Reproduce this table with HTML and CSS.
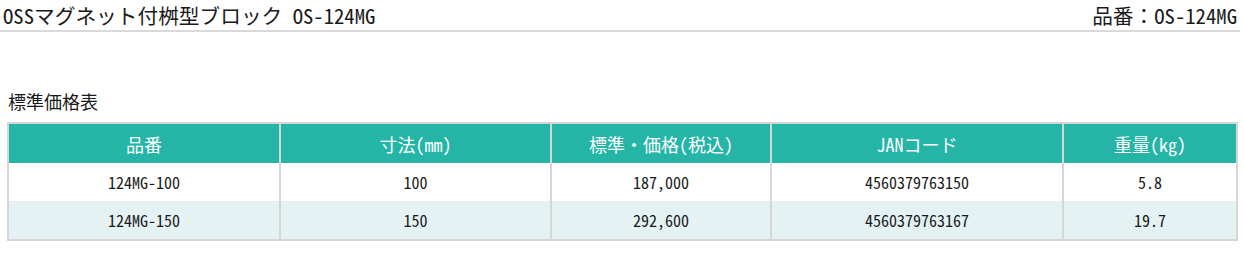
FILE: index.html
```html
<!DOCTYPE html>
<html lang="ja">
<head>
<meta charset="utf-8">
<title>OSSマグネット付桝型ブロック OS-124MG</title>
<link rel="stylesheet" href="styles.css">
</head>
<body>
<header class="page-head">
  <h1 class="title">OSSマグネット付桝型ブロック OS-124MG</h1>
  <p class="code">品番：OS-124MG</p>
</header>
<section class="prices">
  <h2 class="prices-title">標準価格表</h2>
  <table class="price-table">
    <thead>
      <tr>
        <th class="c1">品番</th>
        <th class="c2">寸法(mm)</th>
        <th class="c3">標準・価格(税込)</th>
        <th class="c4">JANコード</th>
        <th class="c5">重量(kg)</th>
      </tr>
    </thead>
    <tbody>
      <tr>
        <td>124MG-100</td>
        <td>100</td>
        <td>187,000</td>
        <td>4560379763150</td>
        <td>5.8</td>
      </tr>
      <tr class="alt">
        <td>124MG-150</td>
        <td>150</td>
        <td>292,600</td>
        <td>4560379763167</td>
        <td>19.7</td>
      </tr>
    </tbody>
  </table>
</section>
</body>
</html>
```

FILE: styles.css
```css
html, body {
  margin: 0;
  padding: 0;
  background: #ffffff;
}

body {
  width: 1243px;
  color: #1a1a1a;
  font-family: "Noto Sans Mono CJK JP", "Noto Sans CJK JP", monospace;
}

.page-head {
  display: flex;
  justify-content: space-between;
  align-items: center;
  width: 1240px;
  height: 32px;
  border-bottom: 2px solid #d9d9d9;
  box-sizing: border-box;
  padding: 0 3px 0 3px;
}

.title, .code {
  margin: 0;
  font-size: 20.7px;
  font-weight: normal;
  line-height: 30px;
  font-family: "Noto Sans Mono CJK JP", "Noto Sans CJK JP", monospace;
}

.prices {
  padding: 0 10px 0 7px;
}

.prices-title {
  margin: 56px 0 0 1px;
  font-family: "Noto Sans Mono CJK JP", "Noto Sans CJK JP", monospace;
  font-size: 18px;
  font-weight: normal;
  line-height: 26px;
}

.price-table {
  margin-top: 8px;
  width: 1227px;
  border-collapse: collapse;
  border: 2px solid #d6d6d6;
  table-layout: fixed;
}

.price-table th,
.price-table td {
  border-left: 2px solid #d6d6d6;
  border-right: 2px solid #d6d6d6;
  text-align: center;
  padding: 0;
}

.price-table th {
  background: #25b5a7;
  color: #ffffff;
  font-family: "Noto Sans Mono CJK JP", "Noto Sans CJK JP", monospace;
  font-size: 18px;
  font-weight: normal;
  height: 39px;
}

.price-table td {
  height: 38px;
  font-size: 16px;
  color: #1a1a1a;
  background: #ffffff;
}

.price-table tr.alt td {
  background: #e4f2f4;
}

.c1 { width: 270px; }
.c2 { width: 269px; }
.c3 { width: 218px; }
.c4 { width: 290px; }
.c5 { width: 172px; }
```
